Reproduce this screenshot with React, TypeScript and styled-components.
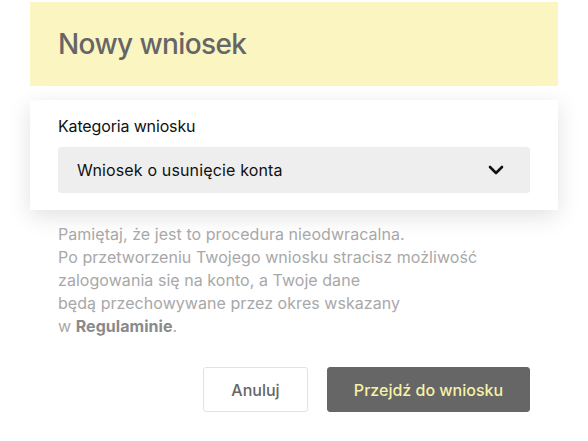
import React from 'react';
import styled, { createGlobalStyle } from 'styled-components';

const GlobalStyle = createGlobalStyle`
  html, body {
    margin: 0;
    padding: 0;
    background: #ffffff;
  }
  body {
    font-family: Inter, "Noto Sans", "Liberation Sans", sans-serif;
    -webkit-font-smoothing: antialiased;
  }
`;

const Page = styled.div`
  width: 588px;
  height: 441px;
  padding: 2px 30px 0;
  box-sizing: border-box;
  overflow: hidden;
  display: flex;
  flex-direction: column;
`;

const Header = styled.div`
  height: 84px;
  background: #fbf6c1;
  display: flex;
  align-items: center;
  padding: 0 28px;
  box-sizing: border-box;
`;

const Title = styled.h1`
  margin: 0;
  font-size: 28px;
  font-weight: 500;
  color: #666666;
  letter-spacing: -0.6px;
`;

const Card = styled.div`
  margin-top: 14px;
  background: #ffffff;
  box-shadow: 0 6px 22px rgba(0, 0, 0, 0.12);
  padding: 16px 28px 17px;
  display: flex;
  flex-direction: column;
  gap: 11px;
`;

const Label = styled.label`
  font-size: 16px;
  line-height: 20px;
  letter-spacing: -0.15px;
  color: #111111;
`;

const Select = styled.div`
  height: 46px;
  background: #eeeeee;
  border-radius: 3px;
  display: flex;
  align-items: center;
  justify-content: space-between;
  padding: 0 26px 0 19px;
  font-size: 16px;
  letter-spacing: 0.15px;
  color: #111111;
`;

const Notice = styled.p`
  margin: 13px 0 0;
  padding: 0 28px;
  font-size: 16px;
  line-height: 23px;
  letter-spacing: 0.05px;
  color: #a8a8a8;

  strong {
    font-weight: 700;
    color: #8a8a8a;
  }
`;

const Actions = styled.div`
  margin-top: 29px;
  padding: 0 28px;
  display: flex;
  justify-content: flex-end;
  gap: 19px;
`;

const Button = styled.button<{ primary?: boolean }>`
  height: 45px;
  width: ${({ primary }) => (primary ? '203px' : '105px')};
  box-sizing: border-box;
  border-radius: 3px;
  border: 1px solid ${({ primary }) => (primary ? '#666666' : '#e2e2e2')};
  background: ${({ primary }) => (primary ? '#666666' : '#ffffff')};
  color: ${({ primary }) => (primary ? '#f7f1a6' : '#666666')};
  font-family: inherit;
  font-size: 16px;
  font-weight: 500;
  cursor: pointer;
`;

const Chevron = () => (
  <svg width="16" height="10" viewBox="0 0 16 10" fill="none">
    <path d="M2 2 L8 8 L14 2" stroke="#111" strokeWidth="2.6" strokeLinecap="round" strokeLinejoin="round" />
  </svg>
);

export default function App() {
  return (
    <>
      <GlobalStyle />
      <Page>
        <Header>
          <Title>Nowy wniosek</Title>
        </Header>
        <Card>
          <Label>Kategoria wniosku</Label>
          <Select>
            <span>Wniosek o usunięcie konta</span>
            <Chevron />
          </Select>
        </Card>
        <Notice>
          Pamiętaj, że jest to procedura nieodwracalna.
          <br />
          Po przetworzeniu Twojego wniosku stracisz możliwość
          <br />
          zalogowania się na konto, a Twoje dane
          <br />
          będą przechowywane przez okres wskazany
          <br />w <strong>Regulaminie</strong>.
        </Notice>
        <Actions>
          <Button>Anuluj</Button>
          <Button primary>Przejdź do wniosku</Button>
        </Actions>
      </Page>
    </>
  );
}
